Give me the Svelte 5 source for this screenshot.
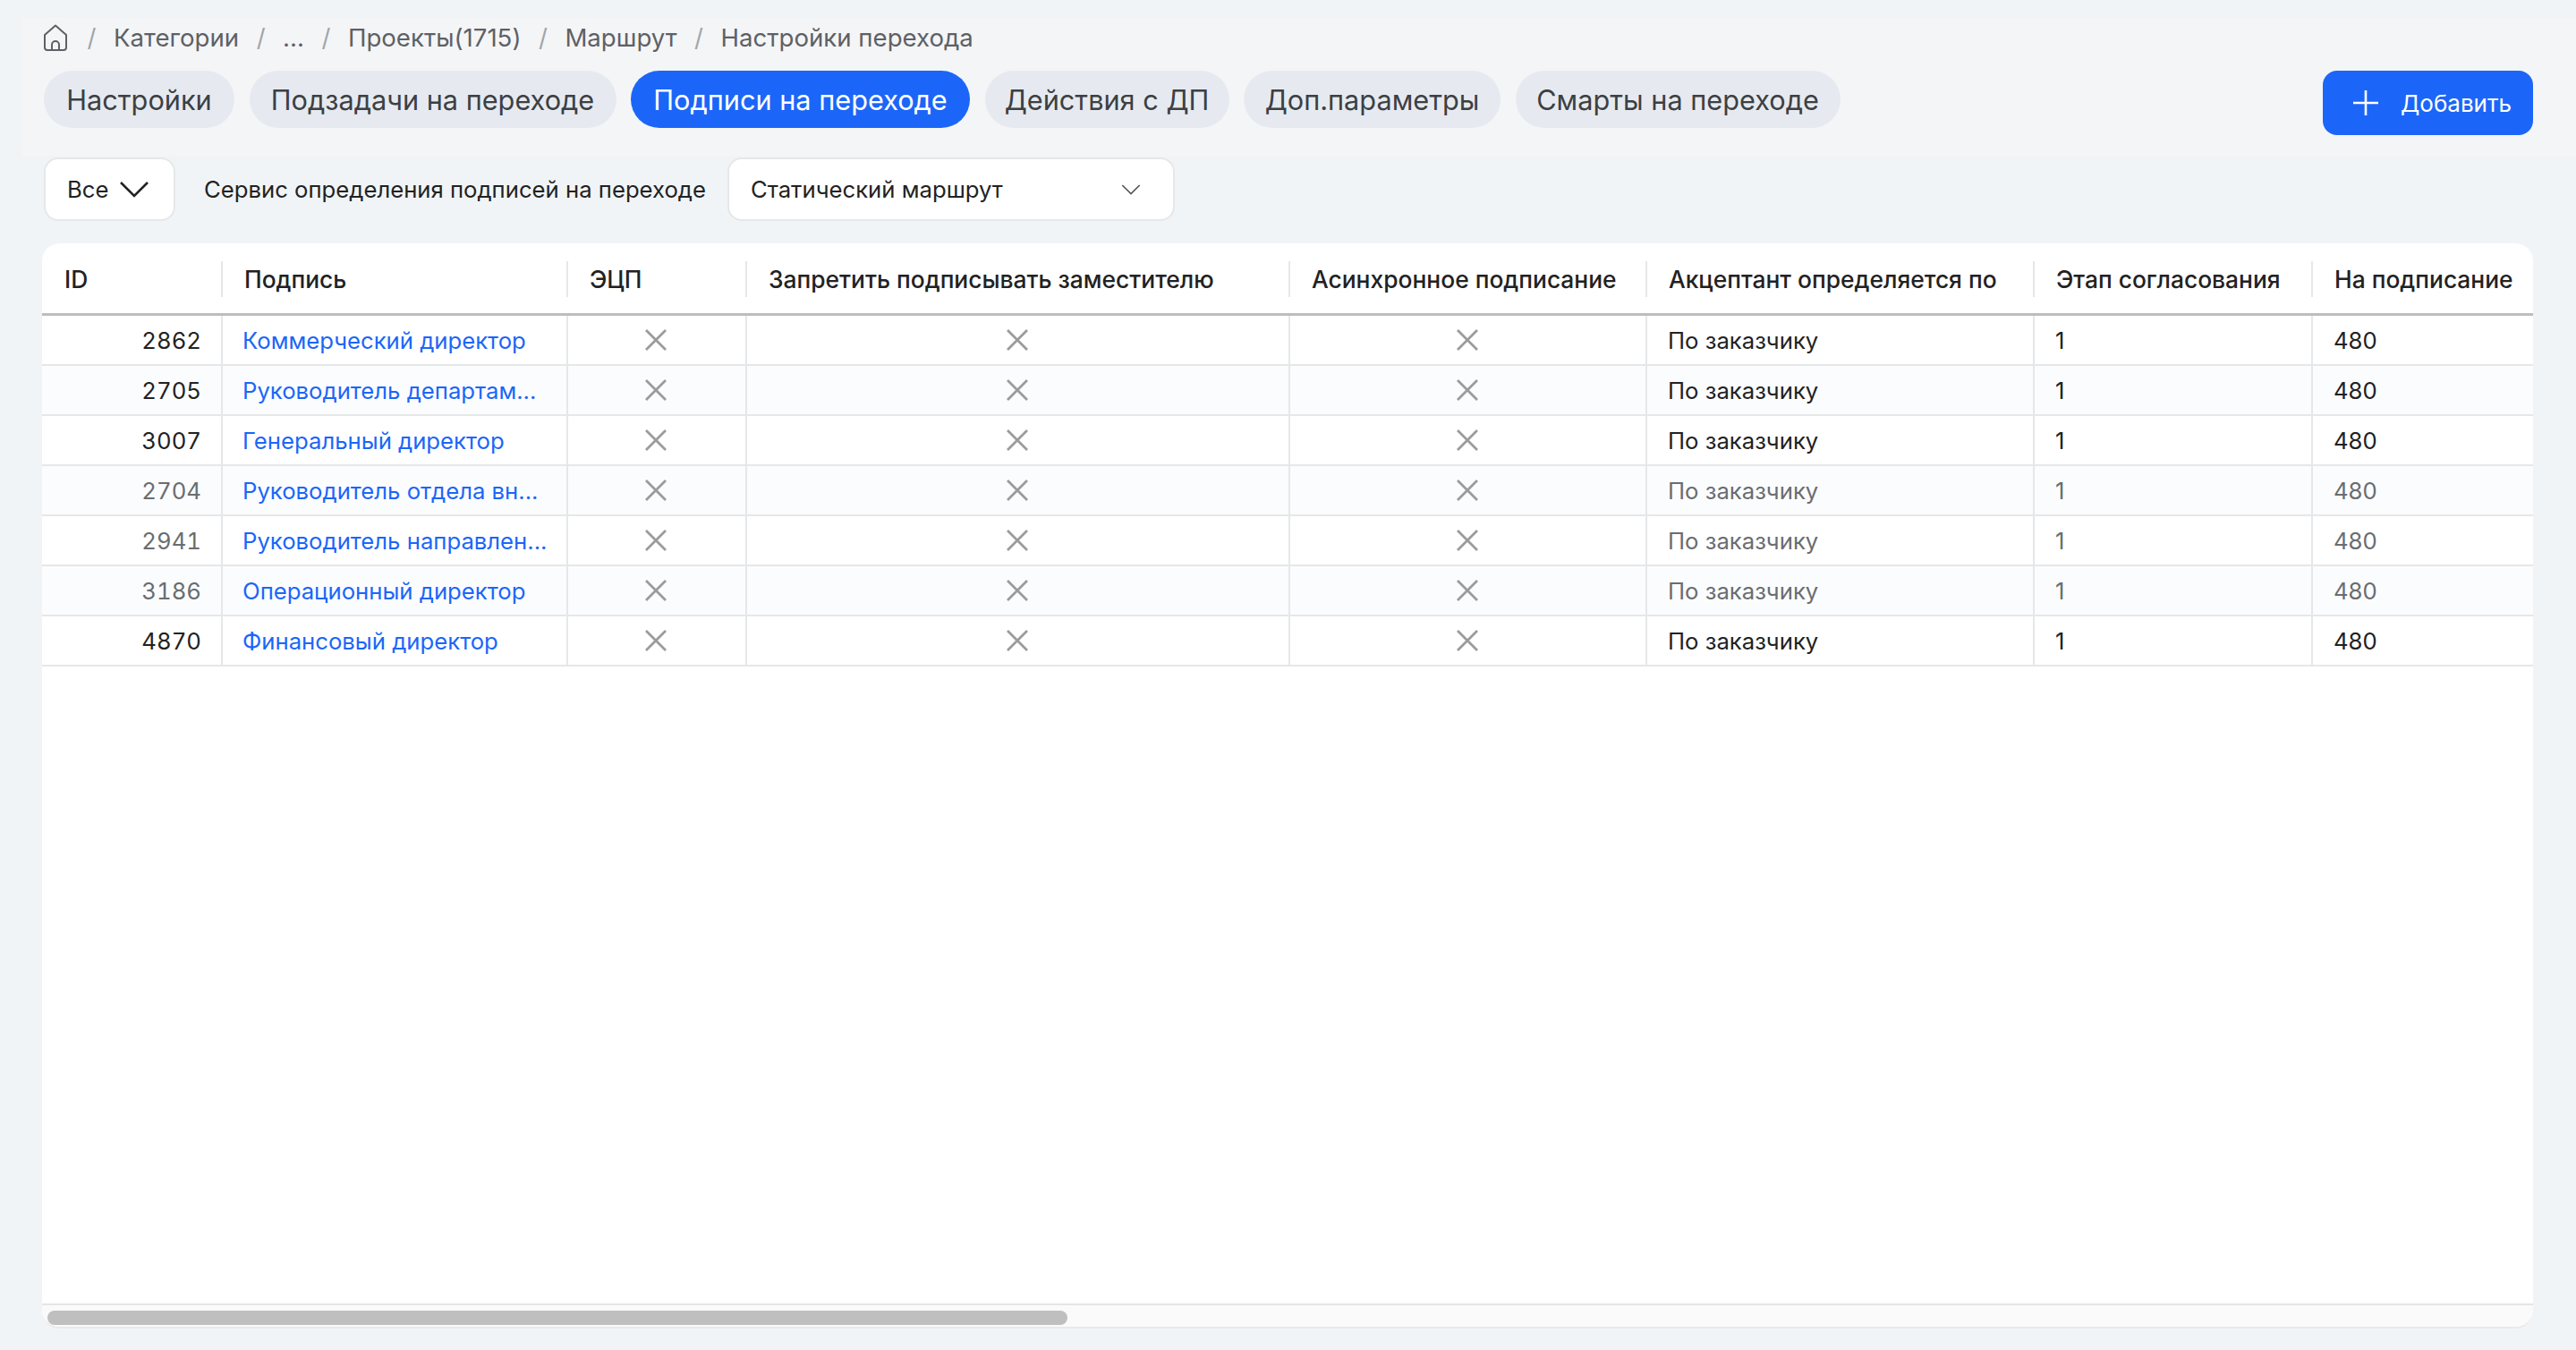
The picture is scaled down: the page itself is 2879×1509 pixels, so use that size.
<script lang="ts">
  const crumbs = ['Категории', '...', 'Проекты(1715)', 'Маршрут', 'Настройки перехода'];
  const tabs = [
    { label: 'Настройки', width: 213 },
    { label: 'Подзадачи на переходе', width: 410 },
    { label: 'Подписи на переходе', width: 379 },
    { label: 'Действия с ДП', width: 273 },
    { label: 'Доп.параметры', width: 287 },
    { label: 'Смарты на переходе', width: 363 }
  ];
  const activeTab = 'Подписи на переходе';

  const columns = [
    { title: 'ID', width: 202 },
    { title: 'Подпись', width: 386 },
    { title: 'ЭЦП', width: 200 },
    { title: 'Запретить подписывать заместителю', width: 607 },
    { title: 'Асинхронное подписание', width: 399 },
    { title: 'Акцептант определяется по', width: 433 },
    { title: 'Этап согласования', width: 311 },
    { title: 'На подписание', width: 246 }
  ];

  const rows = [
    { id: 2862, name: 'Коммерческий директор', muted: false },
    { id: 2705, name: 'Руководитель департам...', muted: false },
    { id: 3007, name: 'Генеральный директор', muted: false },
    { id: 2704, name: 'Руководитель отдела вн...', muted: true },
    { id: 2941, name: 'Руководитель направлен...', muted: true },
    { id: 3186, name: 'Операционный директор', muted: true },
    { id: 4870, name: 'Финансовый директор', muted: false }
  ];
</script>

{#snippet chevron(cls: string)}
  <svg class={cls} viewBox="0 0 34 20" fill="none" aria-hidden="true">
    <path d="M2 3l15 15L32 3" stroke="currentColor" stroke-width="2.6" />
  </svg>
{/snippet}

{#snippet cross()}
  <svg class="cross" viewBox="0 0 24 24" fill="none" aria-hidden="true">
    <path d="M1 1l22 22M23 1L1 23" stroke="currentColor" stroke-width="2.8" />
  </svg>
{/snippet}

<div class="page">
  <header class="head">
    <nav class="crumbs">
      <svg class="home" viewBox="0 0 26 30" fill="none" aria-hidden="true">
        <path d="M13 1.5L25 12v14a3 3 0 0 1-3 3H4a3 3 0 0 1-3-3V12z" stroke="currentColor" stroke-width="2" stroke-linejoin="round" />
        <path d="M9 29v-6a4 4 0 0 1 8 0v6" stroke="currentColor" stroke-width="2" />
      </svg>
      {#each crumbs as crumb}
        <span class="sep">/</span>
        <span>{crumb}</span>
      {/each}
    </nav>
    <div class="tabs-row">
      <div class="tabs">
        {#each tabs as tab}
          <button type="button" class="tab" class:active={tab.label === activeTab} style="width: {tab.width}px">{tab.label}</button>
        {/each}
      </div>
      <button type="button" class="add">
        <svg viewBox="0 0 28 28" fill="none" aria-hidden="true">
          <path d="M14 0v28M0 14h28" stroke="currentColor" stroke-width="2.6" />
        </svg>
        Добавить
      </button>
    </div>
  </header>

  <div class="filters">
    <button type="button" class="select select-all">
      Все
      {@render chevron('chev-big')}
    </button>
    <span class="filter-label">Сервис определения подписей на переходе</span>
    <button type="button" class="select select-service">
      Статический маршрут
      {@render chevron('chev-small')}
    </button>
  </div>

  <section class="card">
    <div class="scroll">
      <table>
        <colgroup>
          {#each columns as col}
            <col style="width: {col.width}px" />
          {/each}
        </colgroup>
        <thead>
          <tr>
            {#each columns as col}
              <th><div class="th-inner">{col.title}</div></th>
            {/each}
          </tr>
        </thead>
        <tbody>
          {#each rows as row}
            <tr class:muted={row.muted}>
              <td class="num">{row.id}</td>
              <td class="link-cell"><a href="#top">{row.name}</a></td>
              <td class="icon-cell">{@render cross()}</td>
              <td class="icon-cell">{@render cross()}</td>
              <td class="icon-cell">{@render cross()}</td>
              <td class="text-cell">По заказчику</td>
              <td class="text-cell">1</td>
              <td class="text-cell">480</td>
            </tr>
          {/each}
        </tbody>
      </table>
    </div>
    <div class="scrollbar"><div class="thumb"></div></div>
  </section>
</div>

<style>
  :global(body) {
    margin: 0;
    background: #f1f4f7;
  }

  .page {
    display: flex;
    flex-direction: column;
    box-sizing: border-box;
    height: 100vh;
    padding: 20px 0 24px;
    font-family: Inter, 'Noto Sans', sans-serif;
    color: #222;
    overflow: hidden;
  }

  button {
    font-family: inherit;
    cursor: pointer;
  }

  .head {
    margin-left: 25px;
    padding: 0 48px 0 24px;
    height: 154px;
    box-sizing: border-box;
    background: #f4f5f7;
  }

  .crumbs {
    display: flex;
    align-items: center;
    gap: 19.5px;
    height: 44px;
    font-size: 27.6px;
    color: #5d6166;
  }

  .home {
    width: 26px;
    height: 30px;
    margin-right: 3px;
  }

  .sep {
    color: #a3a5a8;
  }

  .tabs-row {
    display: flex;
    justify-content: space-between;
    align-items: flex-start;
    margin-top: 15px;
  }

  .tabs {
    display: flex;
    gap: 16.5px;
  }

  .tab {
    height: 64px;
    padding: 0;
    border: 0;
    border-radius: 32px;
    background: #e6eaf0;
    color: #3c4043;
    font-size: 30.7px;
    white-space: nowrap;
  }

  .tab.active {
    background: #1b66f8;
    color: #fff;
  }

  .add {
    display: flex;
    align-items: center;
    gap: 25px;
    width: 235px;
    height: 72px;
    padding: 0 0 0 34px;
    box-sizing: border-box;
    border: 0;
    border-radius: 16px;
    background: #1b66f8;
    color: #fff;
    font-size: 26px;
  }

  .add svg {
    width: 28px;
    height: 28px;
    flex: none;
  }

  .filters {
    display: flex;
    align-items: center;
    height: 72px;
    margin: 1px 48px 0 49px;
    font-size: 25.7px;
  }

  .select {
    display: flex;
    align-items: center;
    height: 71px;
    box-sizing: border-box;
    border: 2px solid #e6e7e8;
    border-radius: 16px;
    background: #fff;
    color: #222;
    font-size: 25.7px;
  }

  .select-all {
    width: 147px;
    padding: 0 0 0 24px;
    gap: 12px;
  }

  .chev-big {
    width: 34px;
    height: 20px;
    color: #222;
  }

  .filter-label {
    margin: 0 24px 0 32px;
  }

  .select-service {
    width: 500px;
    padding: 0 24px;
    justify-content: space-between;
  }

  .chev-small {
    width: 22px;
    height: 13px;
    margin-right: 12px;
    color: #55585c;
  }

  .card {
    flex: 1;
    display: flex;
    flex-direction: column;
    min-height: 0;
    margin: 25px 48px 0 47px;
    background: #fff;
    border-radius: 20px;
    border-bottom: 2px solid #e8e9ea;
    overflow: hidden;
  }

  .scroll {
    flex: 1;
    min-height: 0;
    overflow: hidden;
  }

  table {
    width: 2784px;
    table-layout: fixed;
    border-collapse: separate;
    border-spacing: 0;
    font-size: 25.7px;
  }

  th {
    height: 78px;
    padding: 0;
    vertical-align: top;
    text-align: left;
    font-size: 26.4px;
    font-weight: 550;
    border-bottom: 3px solid #bdbdbd;
    color: #222;
  }

  .th-inner {
    display: flex;
    align-items: center;
    height: 40px;
    margin-top: 20px;
    padding-left: 24px;
    border-right: 2px solid #e6e7e8;
    white-space: nowrap;
  }

  th:first-child .th-inner {
    padding-left: 25px;
  }

  th:last-child .th-inner {
    border-right: 0;
  }

  td {
    height: 54px;
    padding: 0 23px;
    border-right: 2px solid #e6e7e8;
    border-bottom: 2px solid #e6e7e8;
    white-space: nowrap;
  }

  td:last-child {
    border-right: 0;
  }

  tbody tr:nth-child(even) td {
    background: #fbfcfe;
  }

  .num {
    padding-right: 22px;
    text-align: right;
    font-variant-numeric: tabular-nums;
  }

  .link-cell {
    padding: 0 0 0 22px;
  }

  .link-cell a {
    color: #1b66f8;
    text-decoration: none;
  }

  .icon-cell {
    padding: 0 2px 0 0;
    text-align: center;
    line-height: 0;
  }

  .cross {
    width: 24px;
    height: 24px;
    color: #9b9b9b;
  }

  .muted .num,
  .muted .text-cell {
    color: #6a6d70;
  }

  .scrollbar {
    flex: none;
    height: 26px;
    box-sizing: border-box;
    padding: 6px 0 0 6px;
    border-top: 2px solid #e5e5e5;
    background: #fafafa;
  }

  .thumb {
    width: 1140px;
    height: 16px;
    border-radius: 8px;
    background: #bfbfbf;
  }
</style>
